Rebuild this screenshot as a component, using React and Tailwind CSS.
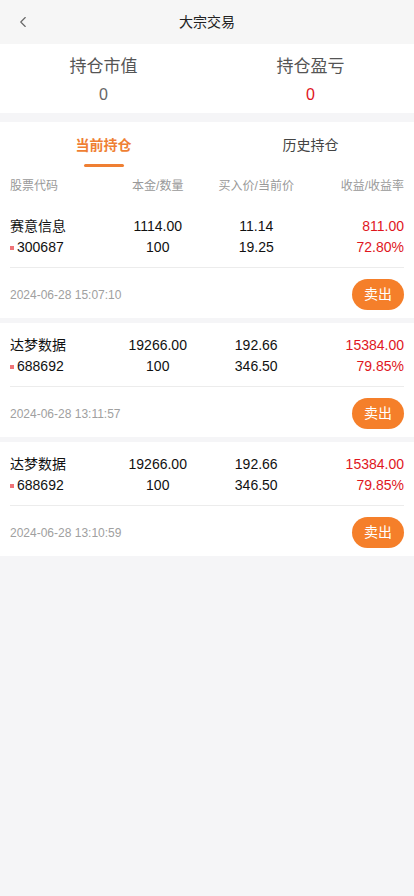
import { ChevronLeft } from 'lucide-react'

const holdings = [
  { name: '赛意信息', code: '300687', amount: '1114.00', qty: '100', buy: '11.14', now: '19.25', profit: '811.00', rate: '72.80%', time: '2024-06-28 15:07:10' },
  { name: '达梦数据', code: '688692', amount: '19266.00', qty: '100', buy: '192.66', now: '346.50', profit: '15384.00', rate: '79.85%', time: '2024-06-28 13:11:57' },
  { name: '达梦数据', code: '688692', amount: '19266.00', qty: '100', buy: '192.66', now: '346.50', profit: '15384.00', rate: '79.85%', time: '2024-06-28 13:10:59' },
]

function HoldingCard({ item }) {
  return (
    <div className="bg-white px-[10px]">
      <div className="grid grid-cols-4 pt-[12px] pb-[9px] text-[14px] leading-[21px] text-[#111]">
        <div>{item.name}</div>
        <div className="text-center">{item.amount}</div>
        <div className="text-center">{item.buy}</div>
        <div className="text-right text-[#e0161d]">{item.profit}</div>
        <div className="flex items-center">
          <span className="mr-[3px] h-[4px] w-[4px] bg-[#ef7478]" />
          {item.code}
        </div>
        <div className="text-center">{item.qty}</div>
        <div className="text-center">{item.now}</div>
        <div className="text-right text-[#e0161d]">{item.rate}</div>
      </div>
      <div className="flex h-[51px] items-center justify-between border-t border-[#ececec] pt-[3px]">
        <span className="text-[12px] text-[#a0a0a0]">{item.time}</span>
        <button
          type="button"
          className="h-[31px] w-[52px] rounded-full bg-[#f57f2a] text-[14px] text-white"
        >
          卖出
        </button>
      </div>
    </div>
  )
}

export default function App() {
  return (
    <div
      className="min-h-[896px] bg-[#f5f5f7]"
      style={{ fontFamily: '"Liberation Sans", Arial, "Noto Sans CJK SC", sans-serif' }}
    >
      <header className="relative flex h-[44px] items-center justify-center bg-[#f6f6f6]">
        <ChevronLeft className="absolute left-[14px] h-[18px] w-[18px] text-[#666]" strokeWidth={1.5} />
        <h1 className="text-[14px] text-[#222]">大宗交易</h1>
      </header>

      <section className="grid h-[69px] grid-cols-2 bg-white text-center">
        <div className="flex flex-col items-center pt-[12px]">
          <span className="text-[17px] leading-[22px] text-[#555]">持仓市值</span>
          <span className="mt-[7px] text-[16px] leading-[20px] text-[#666]">0</span>
        </div>
        <div className="flex flex-col items-center pt-[12px]">
          <span className="text-[17px] leading-[22px] text-[#555]">持仓盈亏</span>
          <span className="mt-[7px] text-[16px] leading-[20px] text-[#e0161d]">0</span>
        </div>
      </section>

      <div className="mt-[9px] bg-white">
        <div className="grid h-[46px] grid-cols-2 text-[14px]">
          <div className="relative flex items-center justify-center font-bold text-[#ef7f33]">
            当前持仓
            <span className="absolute bottom-[1px] h-[3px] w-[40px] rounded-full bg-[#ef7f33]" />
          </div>
          <div className="flex items-center justify-center text-[#444]">历史持仓</div>
        </div>
        <div className="grid h-[36px] grid-cols-4 items-center px-[10px] text-[12px] text-[#999]">
          <div>股票代码</div>
          <div className="text-center">本金/数量</div>
          <div className="text-center">买入价/当前价</div>
          <div className="text-right">收益/收益率</div>
        </div>
      </div>

      <div className="flex flex-col gap-[5px]">
        {holdings.map((item, i) => (
          <HoldingCard key={i} item={item} />
        ))}
      </div>
    </div>
  )
}
